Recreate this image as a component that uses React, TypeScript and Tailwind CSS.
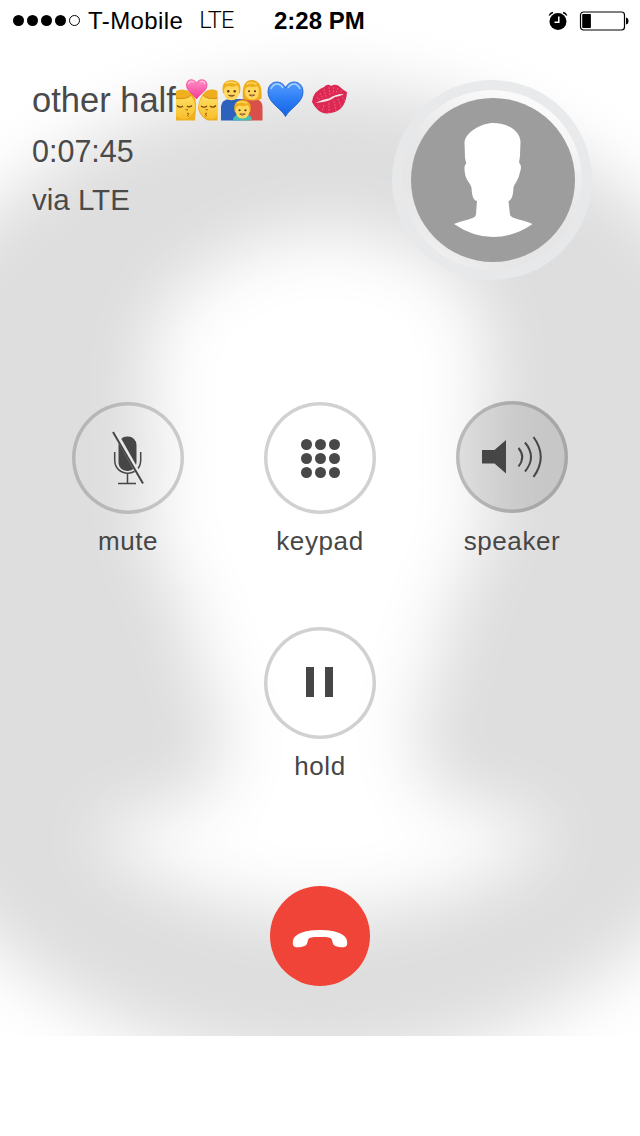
import type { ReactNode } from "react";

const PERSON =
  "M0 -57 C-11 -57 -28 -48 -28.500 -37 L-28 -23 C-28 -21 -27 -19 -26.800 -16 C-29.500 -15 -28.500 -8 -27.500 -4 C-26 1 -22 4 -21.500 8 C-21 14 -20.500 20 -16 21 L-17 34 C-17 39 -26 39 -39 44 Q-20 57 0 57 Q21 57 39.500 44 C28 39 19 39 17 35 L15.500 21 C19 20 20 15 20.500 8 C21 4 25 1 26.500 -6 C28 -11 29 -14 26.200 -17 C26 -20 27 -22 27 -25 L27.500 -38 C27 -50 14 -57 0 -57 Z";

function Backdrop() {
  return (
    <svg className="absolute inset-x-0 top-0 h-[1036px] w-[640px]" viewBox="0 0 640 1036" aria-hidden="true">
      <defs>
        <filter id="soft" filterUnits="userSpaceOnUse" x="-300" y="-100" width="1240" height="1400">
          <feGaussianBlur stdDeviation="33" />
        </filter>
      </defs>
      <g filter="url(#soft)">
        <circle cx="320" cy="576" r="491" fill="#dedede" />
        <path d={PERSON} transform="translate(321 573) scale(5.95)" fill="#fff" />
      </g>
    </svg>
  );
}

function AlarmIcon() {
  return (
    <svg width="20" height="20" viewBox="0 0 20 20" fill="none">
      <circle cx="10" cy="10.500" r="8.500" fill="#000" />
      <path d="M1.200 4.500Q2.500 2 5 1.500M18.800 4.500Q17.500 2 15 1.500" stroke="#000" strokeWidth="1.300" />
      <path d="M10.800 5.500V11.200H6.500" stroke="#fff" strokeWidth="1.500" />
    </svg>
  );
}

function BatteryIcon() {
  return (
    <svg width="50" height="20" viewBox="0 0 50 20">
      <rect x="1.500" y="1" width="44" height="18" rx="3" fill="#fff" stroke="#000" strokeWidth="1.200" />
      <rect x="3.200" y="3" width="8.700" height="14" rx="0.800" />
      <path d="M47 6.500Q49.500 7 49.500 10T47 13.500Z" />
    </svg>
  );
}

function StatusBar() {
  return (
    <div className="grid h-[41px] grid-cols-[274px_1fr_auto] items-center pr-[11px] text-black">
      <div className="flex items-center pl-[13px]">
        <div className="flex gap-[3px]">
          {[0, 1, 2, 3].map((i) => (
            <span key={i} className="size-[11px] rounded-full bg-black" />
          ))}
          <span className="size-[11px] rounded-full border border-black" />
        </div>
        <span className="ml-[8px] text-[24px] tracking-[0.4px]">T-Mobile</span>
        <span className="ml-[16px] font-['Roboto'] text-[23.500px] font-light tracking-[-0.700px]">LTE</span>
      </div>
      <span className="text-[24px] font-bold whitespace-nowrap">2:28 PM</span>
      <div className="flex items-center gap-[11px]">
        <AlarmIcon />
        <BatteryIcon />
      </div>
    </div>
  );
}

function KissEmoji() {
  return (
    <svg width="42" height="42" viewBox="0 0 42 42" fill="none">
      <defs>
        <linearGradient id="skin" x2="0" y2="1">
          <stop stopColor="#ffdf62" />
          <stop offset="1" stopColor="#f8be2c" />
        </linearGradient>
        <linearGradient id="pink" x2="0" y2="1">
          <stop stopColor="#ff8fc7" />
          <stop offset="1" stopColor="#f43b96" />
        </linearGradient>
      </defs>
      <path d="M0 12Q8 8 16 14Q21 20 20 30L19 41.500H0Z" fill="#eeb01e" />
      <path d="M0 20Q10 21 15 17Q20 23 19 30Q16 39 8 40Q3 40 0 37Z" fill="url(#skin)" />
      <path d="M41.500 12Q33 8 27 15Q22 22 22 30Q25 39 32 41.500H41.500Z" fill="#eeae20" />
      <path d="M41.500 20Q32 21 27 17Q22 23 23 30Q26 39 34 40Q39 40 41.500 37Z" fill="url(#skin)" />
      <path d="M0 19Q10 21 15 16M27 16Q32 21 41.500 19" stroke="#ce8c13" strokeWidth="0.800" />
      <path d="M1 26.500Q4 29.500 7 27M11 27Q13 29 16 26.500M25 27Q28 29.500 31 27M34 27Q37 29.500 40 26.500" stroke="#75440b" strokeWidth="1.200" />
      <path d="M9.500 30.500Q11 31.500 12 30.500M29.500 30.500Q31 31.500 32 30.500M11 34L13 35L11.500 36.200L12.500 37.500M31 34L29 35L30.500 36.200L29.500 37.500" stroke="#9a5d14" />
      <path d="M20.500 20C16 14 10.500 12 10.500 6C10.500-.5 18-.8 20.500 4C23-.8 31-.5 31 6C31 12 25 14 20.500 20Z" fill="url(#pink)" stroke="#e92e88" strokeWidth="0.600" />
      <path d="M12.500 5Q14 1 18 3M24 3Q28 1 29 5" stroke="#ffc2df" strokeWidth="1.300" />
    </svg>
  );
}

function Face({ x, y, s }: { x: number; y: number; s: number }) {
  return (
    <g transform={`translate(${x} ${y}) scale(${s})`}>
      <path d="M-8.500 3C-11-7-6-10.500 0-10.500S11-7 8.500 3Z" fill="#efae1c" />
      <path d="M-7.800 0Q-7-4-3-4.500Q2-3 6-5Q7.500-3 7.800 0Q8 10 0 10T-7.800 0Z" fill="#ffd75c" />
      <path d="M-6-7Q-1-10 5-7" fill="none" stroke="#ffdc68" strokeWidth="1.500" />
      <circle cx="-3.300" cy="0.800" r="1.200" fill="#543313" />
      <circle cx="3.300" cy="0.800" r="1.200" fill="#543313" />
      <path d="M-3 5Q0 7.500 3 5Z" fill="#fff" stroke="#8a4b17" />
    </g>
  );
}

function FamilyEmoji() {
  return (
    <svg width="42" height="42" viewBox="0 0 42 42">
      <path d="M0 41.500V27Q1 21 8 20H20V41.500Z" fill="#2c62be" />
      <path d="M20 41.500V20H34Q41 21 41.500 27V41.500Z" fill="#d94f4a" />
      <path d="M22 20Q20 1 31 1T40.500 20Q31 23 22 20Z" fill="#eeab20" />
      <Face x={10.500} y={11.500} s={0.98} />
      <Face x={31} y={11.500} s={0.9} />
      <path d="M12 41.500Q12 36 18 36H26Q31 36 31 41.500Z" fill="#45bdb5" />
      <Face x={21.500} y={30.500} s={0.9} />
    </svg>
  );
}

function HeartEmoji() {
  return (
    <svg width="37" height="42" viewBox="0 0 37 42" fill="none">
      <defs>
        <linearGradient id="blue" x2="0" y2="1">
          <stop stopColor="#579dff" />
          <stop offset="0.500" stopColor="#2d7df5" />
          <stop offset="1" stopColor="#1264df" />
        </linearGradient>
      </defs>
      <path d="M18.500 37.500C14 29 1 24 1 13C1 1 15 0 18.500 9C22 0 36 1 36 13C36 24 23 29 18.500 37.500Z" fill="url(#blue)" stroke="#1757c5" strokeWidth="0.800" />
      <path d="M4 10Q6 4.500 11 5Q14 5.500 16 9M21 9Q23 5 27 5Q31 5 33 10" stroke="#a9d2ff" strokeWidth="1.600" />
    </svg>
  );
}

function LipsEmoji() {
  return (
    <svg width="37" height="42" viewBox="0 0 37 42" fill="none">
      <path d="M1 23Q2 12 13 8Q17 4 20 7Q25 4 29 8Q32 11 36 13Q35 29 24 33Q12 37 6 30Q3 27 1 23Z" fill="#dc2852" />
      <path d="M4.500 24Q12 20 18 19.500Q25 14.500 33 15Q29 17.500 24 18Q19 22 12 23Z" fill="#f0e6e8" />
      <path d="M6 18L9 21M9 14L12 20M13 10L15 18M18 8L19 17M23 8L22 15M27 9L25 14M31 11L29 14M8 27L6 29M13 26L11 32M18 24L18 34M23 22L25 32M27 20L30 28M31 18L34 22" stroke="#f07f99" strokeWidth="0.600" strokeDasharray="2 1" />
    </svg>
  );
}

function Avatar() {
  return (
    <div className="flex size-[200px] items-center justify-center rounded-full border-[10px] border-[#e6e8ea]/90 bg-white/25">
      <svg className="ml-px" width="164" height="164" viewBox="-82 -82 164 164">
        <circle r="82" fill="#9d9d9d" />
        <path d={PERSON} fill="#fff" />
      </svg>
    </div>
  );
}

function CallHeader() {
  return (
    <header className="flex justify-between pr-[48px] pl-[32px] text-[#4a4a4a]">
      <div className="pt-[33px]">
        <div className="flex h-[52px] items-center">
          <span className="w-[144px] text-[34.500px] leading-[53px] whitespace-nowrap">other half</span>
          <div className="flex items-center">
            <KissEmoji />
            <span className="ml-[3px]"><FamilyEmoji /></span>
            <span className="ml-[4px]"><HeartEmoji /></span>
            <span className="ml-[7px]"><LipsEmoji /></span>
          </div>
        </div>
        <div className="text-[30.500px] leading-[50px]">0:07:45</div>
        <div className="text-[29.500px] leading-[47px]">via LTE</div>
      </div>
      <div className="pt-[39px]">
        <Avatar />
      </div>
    </header>
  );
}

function MuteIcon() {
  return (
    <svg width="112" height="112" viewBox="0 0 112 112" fill="none">
      <rect x="46.500" y="34.500" width="18" height="34.500" rx="8.500" fill="#464646" />
      <path d="M42.700 50V58C42.700 75.500 68.700 75.500 68.700 58V50M55.500 71V81.500M46 81.500H64" stroke="#464646" strokeWidth="1.500" />
      <path d="M43.500 31L70 78" stroke="#e9e9e9" strokeWidth="4.500" />
      <path d="M41 30L71 81.500" stroke="#464646" strokeWidth="2" />
    </svg>
  );
}

function KeypadIcon() {
  return (
    <div className="grid grid-cols-3 gap-[3px]">
      {[1, 2, 3, 4, 5, 6, 7, 8, 9].map((k) => (
        <span key={k} className="size-[11px] rounded-full bg-[#484848]" />
      ))}
    </div>
  );
}

function SpeakerIcon() {
  return (
    <svg width="112" height="112" viewBox="0 0 112 112" fill="none">
      <path d="M26 49H38.500L50 39V72.500L38.500 62.500H26Z" fill="#464646" />
      <path d="M62.500 47Q70 56 62.500 65.500M69 41.500Q81 56 69 70.500M77.500 36Q92 56 77.500 76" stroke="#464646" strokeWidth="2" />
    </svg>
  );
}

function PauseIcon() {
  return (
    <div className="mr-[2px] mb-[2px] flex gap-[11px]">
      <span className="h-[30px] w-[8px] bg-[#464646]" />
      <span className="h-[30px] w-[8px] bg-[#464646]" />
    </div>
  );
}

function CallButton({ label, active, children }: { label: string; active?: boolean; children: ReactNode }) {
  return (
    <button className="flex flex-col items-center gap-[11px] text-[#464646]">
      <span
        className={
          active
            ? "-mt-px mb-px flex size-[112px] items-center justify-center rounded-full bg-black/10 shadow-[inset_0_0_0_3.5px_rgba(0,0,0,0.16)]"
            : "flex size-[112px] items-center justify-center rounded-full shadow-[inset_0_0_0_3.5px_rgba(0,0,0,0.18)]"
        }
      >
        {children}
      </span>
      <span className="text-[26px] leading-[32px] tracking-[0.6px]">{label}</span>
    </button>
  );
}

export default function App() {
  return (
    <div className="relative h-[1136px] w-[640px] overflow-hidden bg-white font-['Liberation_Sans',sans-serif]">
      <Backdrop />
      <div className="relative flex flex-col">
        <StatusBar />
        <CallHeader />
        <main className="mt-[122px] flex flex-col items-center">
          <div className="grid w-[576px] grid-cols-3">
            <CallButton label="mute"><MuteIcon /></CallButton>
            <CallButton label="keypad"><KeypadIcon /></CallButton>
            <CallButton label="speaker" active><SpeakerIcon /></CallButton>
          </div>
          <div className="mt-[70px]">
            <CallButton label="hold"><PauseIcon /></CallButton>
          </div>
          <button aria-label="End call" className="mt-[104px] flex size-[100px] items-center justify-center rounded-full bg-[#f04438]">
            <svg width="100" height="100" viewBox="0 0 100 100">
              <path d="M23 55C24 47 37 44 50 44S76 47 77 55C78 61 75 62 69 61C63 60 63 58 62 54C61 51 58 51 50 51S39 51 38 54C37 58 37 60 31 61C25 62 22 61 23 55Z" fill="#fff" />
            </svg>
          </button>
        </main>
      </div>
    </div>
  );
}
